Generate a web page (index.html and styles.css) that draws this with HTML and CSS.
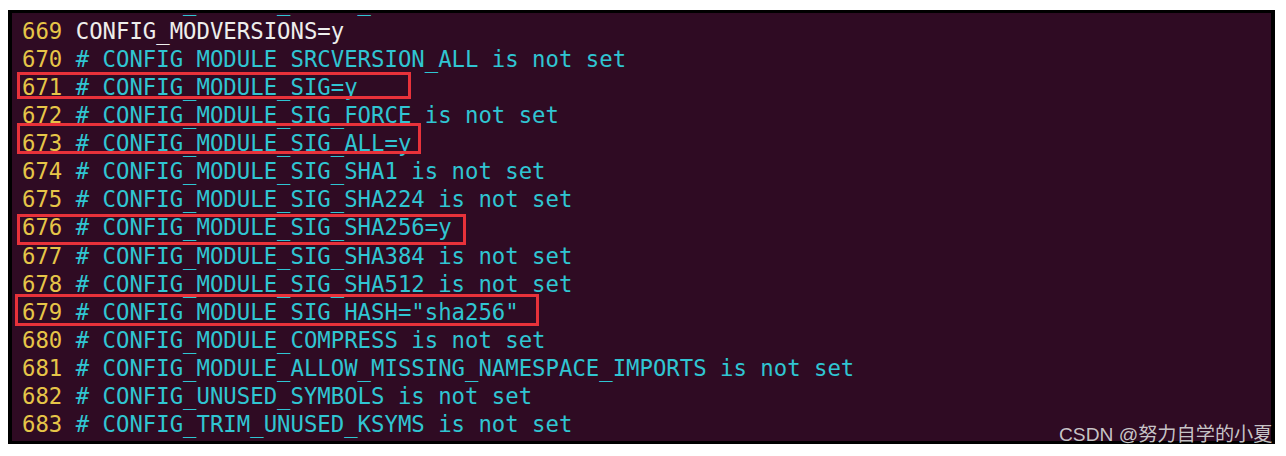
FILE: index.html
```html
<!DOCTYPE html>
<html lang="zh-CN">
<head>
<meta charset="utf-8">
<title>config</title>
<link rel="stylesheet" href="styles.css">
</head>
<body>
<div class="shot">
  <div class="term">
    <div class="lines">
      <div class="ln"><span class="num">668 </span><span class="cm"># CONFIG_MODULE_FORCE_UNLOAD is not set</span></div>
      <div class="ln"><span class="num">669 </span><span class="pl">CONFIG_MODVERSIONS=y</span></div>
      <div class="ln"><span class="num">670 </span><span class="cm"># CONFIG_MODULE_SRCVERSION_ALL is not set</span></div>
      <div class="ln"><span class="num">671 </span><span class="cm"># CONFIG_MODULE_SIG=y</span></div>
      <div class="ln"><span class="num">672 </span><span class="cm"># CONFIG_MODULE_SIG_FORCE is not set</span></div>
      <div class="ln"><span class="num">673 </span><span class="cm"># CONFIG_MODULE_SIG_ALL=y</span></div>
      <div class="ln"><span class="num">674 </span><span class="cm"># CONFIG_MODULE_SIG_SHA1 is not set</span></div>
      <div class="ln"><span class="num">675 </span><span class="cm"># CONFIG_MODULE_SIG_SHA224 is not set</span></div>
      <div class="ln"><span class="num">676 </span><span class="cm"># CONFIG_MODULE_SIG_SHA256=y</span></div>
      <div class="ln"><span class="num">677 </span><span class="cm"># CONFIG_MODULE_SIG_SHA384 is not set</span></div>
      <div class="ln"><span class="num">678 </span><span class="cm"># CONFIG_MODULE_SIG_SHA512 is not set</span></div>
      <div class="ln"><span class="num">679 </span><span class="cm"># CONFIG_MODULE_SIG_HASH="sha256"</span></div>
      <div class="ln"><span class="num">680 </span><span class="cm"># CONFIG_MODULE_COMPRESS is not set</span></div>
      <div class="ln"><span class="num">681 </span><span class="cm"># CONFIG_MODULE_ALLOW_MISSING_NAMESPACE_IMPORTS is not set</span></div>
      <div class="ln"><span class="num">682 </span><span class="cm"># CONFIG_UNUSED_SYMBOLS is not set</span></div>
      <div class="ln"><span class="num">683 </span><span class="cm"># CONFIG_TRIM_UNUSED_KSYMS is not set</span></div>
    </div>
    <div class="mark mark-671"></div>
    <div class="mark mark-673"></div>
    <div class="mark mark-676"></div>
    <div class="mark mark-679"></div>
  </div>
  <div class="watermark">CSDN @努力自学的小夏</div>
</div>
</body>
</html>
```
FILE: styles.css
```css
html, body {
  margin: 0;
  padding: 0;
  background: #ffffff;
}

.shot {
  position: relative;
  width: 1286px;
  height: 456px;
  padding: 10px 0 0 8px;
  box-sizing: border-box;
}

.term {
  position: relative;
  width: 1267px;
  height: 434px;
  box-sizing: border-box;
  border-style: solid;
  border-color: #000000;
  border-width: 3px 4px 3px 4px;
  background: #2f0b23;
  overflow: hidden;
}

.lines {
  margin-top: -24.6px;
  padding-left: 10px;
  font-family: "DejaVu Sans Mono", monospace;
  font-size: 22.3px;
  line-height: 28.14px;
}

.ln {
  height: 28.14px;
  white-space: pre;
}

.num {
  color: #e6c548;
}

.cm {
  color: #30c5d2;
}

.pl {
  color: #eeeeec;
}

.mark {
  position: absolute;
  border: 3px solid #e8323a;
  box-sizing: border-box;
}

/* page coords minus the terminal's content origin (12, 13) */
.mark-671 { left: 5px;  top: 59px;  width: 394px; height: 27px; }
.mark-673 { left: 5px;  top: 110px; width: 404px; height: 31px; }
.mark-676 { left: 5px;  top: 201px; width: 449px; height: 31px; }
.mark-679 { left: 3px;  top: 281px; width: 524px; height: 32px; }

.watermark {
  position: absolute;
  left: 1059px;
  top: 422px;
  font-family: "Liberation Sans", "Noto Sans CJK SC", sans-serif;
  font-size: 19.2px;
  line-height: 26px;
  color: rgba(215, 215, 215, 0.92);
  white-space: nowrap;
}
```
